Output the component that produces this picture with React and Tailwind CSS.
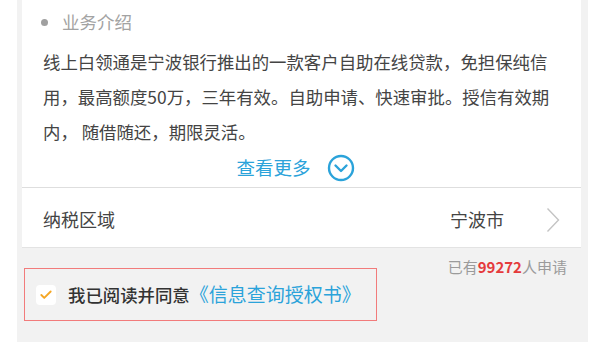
import { Check } from "lucide-react";

const font = { fontFamily: '"Noto Sans CJK SC", "Noto Sans", sans-serif' };

const App = () => {
    return (
        <div className="w-[600px] h-[342px] bg-white overflow-hidden" style={font}>
            <div className="ml-[17px] w-[571px] h-full bg-[#f2f2f2] pl-[5px] pr-[7px] flex flex-col">

                {/* card */}
                <div className="bg-white border-b border-[#e3e3e3]">
                    <div className="px-[21px]">
                        <div className="h-[44px] flex items-center gap-[14px]">
                            <span className="w-[7px] h-[7px] rounded-full bg-[#a0a0a0] ml-[-2px]"></span>
                            <span className="text-[17.5px] text-[#a3a3a3]">业务介绍</span>
                        </div>
                        <div className="text-[17.4px] leading-[35px] text-[#444] whitespace-nowrap">
                            <div>线上白领通是宁波银行推出的一款客户自助在线贷款，免担保纯信</div>
                            <div>用，最高额度50万，三年有效。自助申请、快速审批。授信有效期</div>
                            <div>内， 随借随还，期限灵活。</div>
                        </div>
                        <div className="h-[38px] flex items-center justify-center gap-[16px] pr-[12px]">
                            <span className="text-[18.5px] text-[#2ba3da]">查看更多</span>
                            <svg width="28" height="28" viewBox="0 0 28 28" fill="none">
                                <circle cx="14" cy="14" r="12" stroke="#2ba3da" strokeWidth="2.4" />
                                <path d="M8.5 11.5 L14 17 L19.5 11.5" stroke="#2ba3da" strokeWidth="2.4" strokeLinecap="round" strokeLinejoin="round" />
                            </svg>
                        </div>
                    </div>

                    <div className="h-[1px] bg-[#dedede]"></div>

                    <div className="h-[59px] px-[21px] flex items-center justify-between">
                        <span className="text-[18px] text-[#444] pt-[4px]">纳税区域</span>
                        <div className="flex items-center gap-[42px] pt-[4px]">
                            <span className="text-[18px] text-[#444]">宁波市</span>
                            <svg width="14" height="26" viewBox="0 0 14 26" fill="none">
                                <path d="M1.5 1.5 L12.5 13 L1.5 24.5" stroke="#c4c4c4" strokeWidth="1.4" />
                            </svg>
                        </div>
                    </div>
                </div>

                {/* apply count */}
                <div className="pt-[9px] h-[29px] pr-[14px] text-right text-[15px] leading-[20px] text-[#9b9b9b]">
                    已有<span className="text-[#e53a3c] font-semibold">99272</span>人申请
                </div>

                {/* agreement */}
                <div className="mt-[-9px] ml-[2px] w-[353px] h-[53px] border-[1.5px] border-[#f27b7b] flex items-center pl-[11px] gap-[12px]">
                    <span className="w-[20px] h-[20px] rounded-[4px] bg-white flex items-center justify-center">
                        <Check size={14} strokeWidth={3.2} color="#f5a623" />
                    </span>
                    <span className="text-[17.4px] font-medium text-[#333] whitespace-nowrap">
                        我已阅读并同意<span className="text-[19px] text-[#2ba3da] font-normal">《信息查询授权书》</span>
                    </span>
                </div>
            </div>
        </div>
    );
};

export default App;
